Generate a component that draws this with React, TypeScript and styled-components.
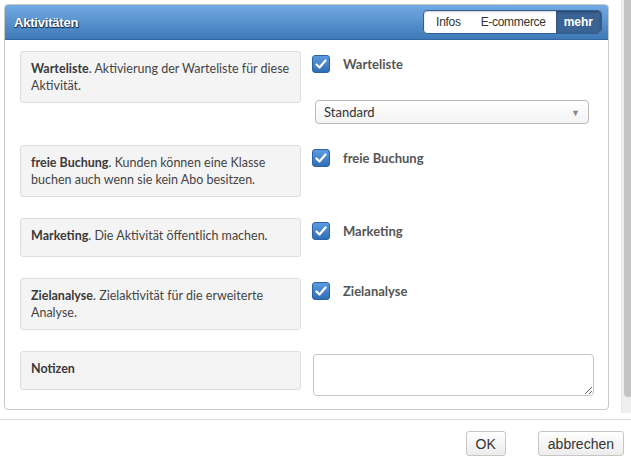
import styled, { createGlobalStyle } from 'styled-components';

const GlobalStyle = createGlobalStyle`
    html, body {
        margin: 0;
        padding: 0;
        background: #fff;
    }
    body {
        font-family: Lato, "Open Sans", sans-serif;
        color: #444;
    }
`;

const Page = styled.div`
    width: 631px;
    height: 460px;
    display: flex;
    flex-direction: column;
    overflow: hidden;
`;

const ScrollArea = styled.div`
    height: 413px;
    display: flex;
    flex-direction: row;
`;

const Content = styled.div`
    flex: 1;
    padding: 4px 12px 0 4px;
`;

const ScrollTrack = styled.div`
    width: 10px;
    background: #efefef;
    border-left: 1px solid #e6e6e6;
    display: flex;
    justify-content: flex-end;
    padding-bottom: 16px;
    box-sizing: border-box;
`;

const ScrollThumb = styled.div`
    width: 7px;
    height: 100%;
    background: #c4c4c4;
    border-radius: 0 0 0 4px;
`;

const Panel = styled.div`
    border: 1px solid #c9c9c9;
    border-radius: 4px;
    overflow: hidden;
    background: #fff;
`;

const PanelHeader = styled.div`
    height: 35px;
    box-sizing: border-box;
    display: flex;
    align-items: center;
    justify-content: space-between;
    padding: 0 6px 0 9px;
    background: linear-gradient(to bottom, #72aae2 0%, #3f7ab8 100%);
    border-bottom: 1px solid #33679f;
`;

const PanelTitle = styled.div`
    color: #fff;
    font-family: "Liberation Sans", Arial, sans-serif;
    font-weight: bold;
    font-size: 13px;
    letter-spacing: -0.2px;
    text-shadow: 0 1px 1px #1d3656, 1px 1px 1px #1d3656;
`;

const TabGroup = styled.div`
    display: flex;
    height: 22px;
    padding-left: 2px;
    background: #fff;
    border: 1px solid #2f5f95;
    border-radius: 4px;
    overflow: hidden;
    box-shadow: inset 0 1px 2px rgba(0, 0, 0, 0.2);
`;

const Tab = styled.div<{ $active?: boolean }>`
    display: flex;
    align-items: center;
    padding: 0 ${p => (p.$active ? '8px' : '10px')};
    font-family: "Liberation Sans", Arial, sans-serif;
    font-size: 12px;
    letter-spacing: ${p => (p.$active ? '0' : '-0.3px')};
    font-weight: ${p => (p.$active ? 'bold' : 'normal')};
    color: ${p => (p.$active ? '#fff' : '#333')};
    background: ${p => (p.$active ? '#3b6494' : 'transparent')};
    box-shadow: ${p => (p.$active ? 'inset 0 1px 3px rgba(0,0,0,0.35)' : 'none')};
`;

const PanelBody = styled.div`
    padding: 11px 15px 13px 15px;
    display: flex;
    flex-direction: column;
    gap: 21px;
`;

const Row = styled.div`
    display: grid;
    grid-template-columns: 281px 281px;
    column-gap: 11px;
    align-items: start;
`;

const InfoBox = styled.div`
    min-height: 39px;
    box-sizing: border-box;
    padding: 8px 10px 8px 10px;
    background: #f4f4f4;
    border: 1px solid #dedede;
    border-radius: 3px;
    font-size: 12.5px;
    line-height: 17px;
    color: #444;

    b {
        color: #3a3a3a;
    }
`;

const Control = styled.div<{ $gap?: number }>`
    display: flex;
    flex-direction: column;
    gap: ${p => p.$gap ?? 0}px;
    padding-top: 4px;
`;

const CheckRow = styled.label`
    display: flex;
    align-items: flex-start;
    gap: 13px;
`;

const CheckBox = styled.span`
    width: 18px;
    height: 18px;
    box-sizing: border-box;
    border-radius: 3px;
    background: linear-gradient(to bottom, #5c9be0 0%, #2f6db6 100%);
    border: 1px solid #2b62a3;
    display: flex;
    align-items: center;
    justify-content: center;
`;

const CheckLabel = styled.span`
    padding-top: 2px;
    font-size: 13px;
    font-weight: bold;
    color: #555;
    line-height: 15px;
`;

const Select = styled.div`
    margin-left: 3px;
    width: 274px;
    height: 24px;
    box-sizing: border-box;
    display: flex;
    align-items: center;
    justify-content: space-between;
    padding: 0 8px 0 8px;
    border: 1px solid #b9b9b9;
    border-radius: 4px;
    background: linear-gradient(to bottom, #ffffff 0%, #f3f3f3 100%);
    font-size: 13px;
    color: #333;
`;

const Caret = styled.span`
    font-size: 9px;
    color: #888;
`;

const NoteArea = styled.textarea`
    margin-left: 1px;
    width: 281px;
    height: 42px;
    box-sizing: border-box;
    border: 1px solid #c4c4c4;
    border-radius: 4px;
    resize: vertical;
    font-family: inherit;
    margin-top: 3px;
`;

const Footer = styled.div`
    margin-top: 6px;
    border-top: 1px solid #dcdcdc;
    display: flex;
    justify-content: flex-end;
    gap: 32px;
    padding: 11px 7px 0 0;
`;

const Button = styled.button`
    height: 25px;
    padding: 0 9px;
    border: 1px solid #c6c6c6;
    border-radius: 3px;
    background: linear-gradient(to bottom, #ffffff 0%, #ececec 100%);
    font-family: "Liberation Sans", Arial, sans-serif;
    font-size: 14px;
    color: #333;
`;

const Check = () => (
    <svg width="12" height="10" viewBox="0 0 12 10">
        <path d="M1.5 5.5 L4.5 8.5 L10.5 1.5" stroke="#fff" strokeWidth="2.2" fill="none" strokeLinecap="round" strokeLinejoin="round" />
    </svg>
);

const options = [
    { title: 'freie Buchung', text: 'Kunden können eine Klasse buchen auch wenn sie kein Abo besitzen.', label: 'freie Buchung' },
    { title: 'Marketing', text: 'Die Aktivität öffentlich machen.', label: 'Marketing' },
    { title: 'Zielanalyse', text: 'Zielaktivität für die erweiterte Analyse.', label: 'Zielanalyse' },
];

const App = () => {
    return (
        <Page>
            <GlobalStyle />
            <ScrollArea>
                <Content>
                    <Panel>
                        <PanelHeader>
                            <PanelTitle>Aktivitäten</PanelTitle>
                            <TabGroup>
                                <Tab>Infos</Tab>
                                <Tab>E-commerce</Tab>
                                <Tab $active>mehr</Tab>
                            </TabGroup>
                        </PanelHeader>
                        <PanelBody>
                            <Row>
                                <InfoBox><b>Warteliste</b>. Aktivierung der Warteliste für diese Aktivität.</InfoBox>
                                <Control $gap={27}>
                                    <CheckRow>
                                        <CheckBox><Check /></CheckBox>
                                        <CheckLabel>Warteliste</CheckLabel>
                                    </CheckRow>
                                    <Select>
                                        Standard
                                        <Caret>▼</Caret>
                                    </Select>
                                </Control>
                            </Row>
                            {options.map(o => (
                                <Row key={o.title}>
                                    <InfoBox><b>{o.title}</b>. {o.text}</InfoBox>
                                    <Control>
                                        <CheckRow>
                                            <CheckBox><Check /></CheckBox>
                                            <CheckLabel>{o.label}</CheckLabel>
                                        </CheckRow>
                                    </Control>
                                </Row>
                            ))}
                            <Row>
                                <InfoBox><b>Notizen</b></InfoBox>
                                <NoteArea />
                            </Row>
                        </PanelBody>
                    </Panel>
                </Content>
                <ScrollTrack>
                    <ScrollThumb />
                </ScrollTrack>
            </ScrollArea>
            <Footer>
                <Button>OK</Button>
                <Button>abbrechen</Button>
            </Footer>
        </Page>
    );
};

export default App;
